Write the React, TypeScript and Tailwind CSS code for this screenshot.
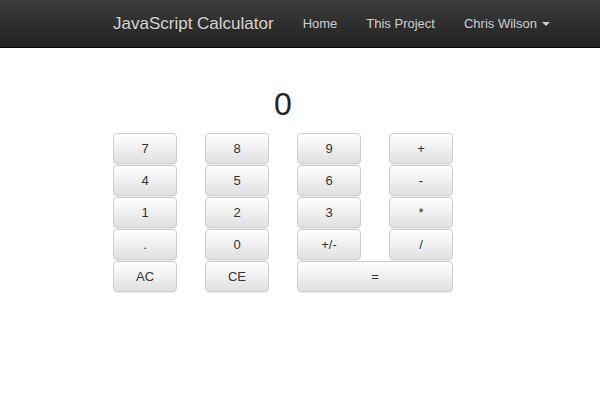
import React from "react";

const btn =
  "h-[31px] rounded-[4px] border border-[#cfcfcf] bg-gradient-to-b from-[#ffffff] to-[#e0e0e0] text-[13px] text-[#333] shadow-[inset_0_1px_0_rgba(255,255,255,0.15),0_1px_1px_rgba(0,0,0,0.075)] flex items-center justify-center";

export default function App() {
  const keys: { label: string; wide?: boolean }[] = [
    { label: "7" }, { label: "8" }, { label: "9" }, { label: "+" },
    { label: "4" }, { label: "5" }, { label: "6" }, { label: "-" },
    { label: "1" }, { label: "2" }, { label: "3" }, { label: "*" },
    { label: "." }, { label: "0" }, { label: "+/-" }, { label: "/" },
    { label: "AC" }, { label: "CE" }, { label: "=", wide: true },
  ];
  return (
    <div className="w-[600px] h-[400px] bg-white" style={{ fontFamily: '"Liberation Sans", Arial, sans-serif' }}>
      <nav className="h-[48px] bg-gradient-to-b from-[#3c3c3c] to-[#222222] border-b border-[#080808] flex items-center">
        <div className="ml-[113px] text-[17px] text-[#d6d6d6] [text-shadow:0_-1px_0_rgba(0,0,0,0.25)]">JavaScript Calculator</div>
        <div className="ml-[29px] text-[13px] text-[#cfcfcf]">Home</div>
        <div className="ml-[29px] text-[13px] text-[#cfcfcf]">This Project</div>
        <div className="ml-[29px] text-[13px] text-[#cfcfcf] flex items-center">
          Chris Wilson
          <span className="ml-[5px] w-0 h-0 border-l-[4px] border-r-[4px] border-t-[4px] border-l-transparent border-r-transparent border-t-[#cfcfcf]" />
        </div>
      </nav>
      <div className="ml-[113px] w-[340px]">
        <div className="mt-[39px] h-[35px] leading-[35px] text-[32px] text-[#222] text-center">0</div>
        <div className="mt-[11px] grid grid-cols-[64px_64px_64px_64px] gap-x-[28px] gap-y-[1px]">
          {keys.map((k) => (
            <button key={k.label} className={btn + (k.wide ? " col-span-2" : "")}>
              {k.label}
            </button>
          ))}
        </div>
      </div>
    </div>
  );
}
